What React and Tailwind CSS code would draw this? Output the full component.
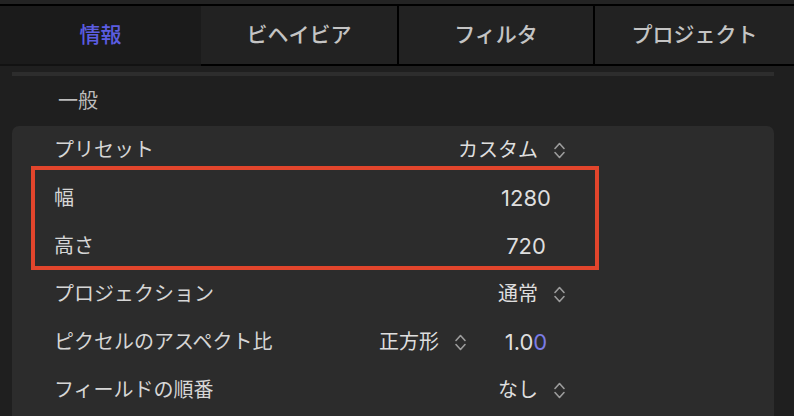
const FONT = "font-['Inter','Noto_Sans_CJK_JP',sans-serif]";

const TABS = [
  { label: '情報', w: 'w-[201px]', active: true },
  { label: 'ビヘイビア', w: 'w-[196px]' },
  { label: 'フィルタ', w: 'w-[196px]' },
  { label: 'プロジェクト', w: 'w-[201px]' },
];

function Stepper() {
  return (
    <svg width="13" height="19" viewBox="0 0 13 19" fill="none" stroke="#9c9c9c" strokeWidth="1.6" strokeLinecap="round" strokeLinejoin="round">
      <path d="M2 7.5 L6.5 2.5 L11 7.5" />
      <path d="M2 11.5 L6.5 16.5 L11 11.5" />
    </svg>
  );
}

function SelectValue({ children }) {
  return (
    <div className="flex items-center gap-[15px]">
      <span>{children}</span>
      <Stepper />
    </div>
  );
}

function NumberField({ children }) {
  return <div className="w-[60px] text-center text-[22px]">{children}</div>;
}

function Row({ label, children }) {
  return (
    <div className="flex h-[48px] items-center pl-[42px] pr-[208px]">
      <div className="flex-1 text-[#d6d6d6]">{label}</div>
      <div className="flex items-center text-[#dedede]">{children}</div>
    </div>
  );
}

export default function App() {
  return (
    <div className={`w-[794px] h-[416px] overflow-hidden bg-[#1f1f1f] ${FONT}`}>
      <div className="h-[4px] bg-[#232323]" />
      <div className="flex h-[62px] border-t-2 border-black">
        {TABS.map((t, i) => (
          <div
            key={t.label}
            className={`${t.w} flex items-center justify-center text-[21px] font-medium ${
              t.active
                ? 'bg-[#1b1b1b] text-[#5b5de2] border-b-2 border-[#121212]'
                : 'bg-[#222222] text-[#c4c4c4] border-b-2 border-black'
            } ${i > 1 ? 'border-l-2 border-l-black' : ''}`}
          >
            {t.label}
          </div>
        ))}
      </div>
      <div className="pl-[12px] pr-[20px]">
        <div className="mt-[6px] h-[4px] bg-[#2d2d2d]" />
        <div className="flex h-[50px] items-center pl-[46px] text-[20px] text-[#bdbdbd]">一般</div>
        <div className="relative rounded-[7px] bg-[#2c2c2c] pb-[20px] text-[20px]">
          <Row label="プリセット">
            <SelectValue>カスタム</SelectValue>
          </Row>
          <Row label="幅">
            <NumberField>1280</NumberField>
            <div className="w-[10px]" />
          </Row>
          <Row label="高さ">
            <NumberField>720</NumberField>
            <div className="w-[10px]" />
          </Row>
          <Row label="プロジェクション">
            <SelectValue>通常</SelectValue>
          </Row>
          <Row label="ピクセルのアスペクト比">
            <SelectValue>正方形</SelectValue>
            <div className="w-[29px]" />
            <NumberField>
              1.0<span className="text-[#7b7ce6]">0</span>
            </NumberField>
            <div className="w-[10px]" />
          </Row>
          <Row label="フィールドの順番">
            <SelectValue>なし</SelectValue>
          </Row>
          <div className="absolute left-[19px] top-[40px] w-[568px] h-[104px] border-4 border-[#e2452c]" />
        </div>
      </div>
    </div>
  );
}
